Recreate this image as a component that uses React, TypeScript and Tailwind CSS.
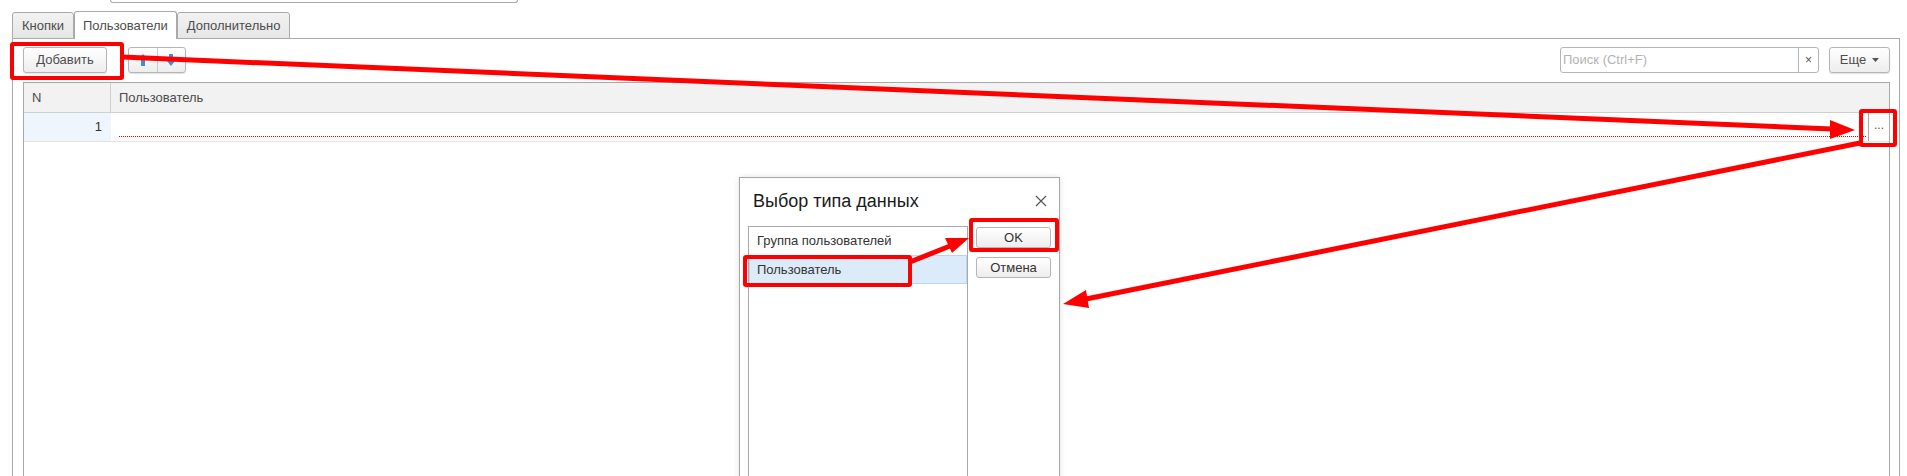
import React from 'react';

const font = { fontFamily: '"Liberation Sans", Arial, sans-serif' };

function ToolButton({ children, className = '' }: { children: React.ReactNode; className?: string }) {
  return (
    <div
      className={`flex h-[26px] items-center justify-center rounded-[3px] border border-[#b5b5b5] bg-gradient-to-b from-white to-[#ededed] text-[13px] text-[#4d4d4d] shadow-[0_1px_1px_rgba(0,0,0,0.12)] ${className}`}
    >
      {children}
    </div>
  );
}

function ArrowUpIcon() {
  return (
    <svg width="10" height="14" viewBox="0 0 10 14">
      <polygon points="5,1 9,6 1,6" fill="#3d8fd7" />
      <rect x="3" y="6" width="4" height="7" fill="#3d8fd7" />
    </svg>
  );
}

function ArrowDownIcon() {
  return (
    <svg width="10" height="14" viewBox="0 0 10 14">
      <rect x="3" y="1" width="4" height="7" fill="#3d8fd7" />
      <polygon points="5,13 9,8 1,8" fill="#3d8fd7" />
    </svg>
  );
}

function Tab({ label, active }: { label: string; active?: boolean }) {
  return active ? (
    <div className="flex h-[28px] items-center rounded-t-[3px] border-x border-t border-[#a9a9a9] bg-white px-[8px] text-[13px] text-[#4d4d4d]">
      {label}
    </div>
  ) : (
    <div className="flex h-[27px] items-center rounded-t-[3px] border border-[#a9a9a9] bg-gradient-to-b from-[#f2f2f2] to-[#e6e6e6] px-[9px] text-[13px] text-[#4d4d4d]">
      {label}
    </div>
  );
}

function RedBox({ className }: { className: string }) {
  return <div className={`pointer-events-none absolute rounded-[3px] border-[4px] border-[#ff0000] ${className}`} />;
}

function DataTypeDialog() {
  return (
    <div className="absolute left-[739px] top-[177px] h-[320px] w-[321px] border border-[#a6a6a6] bg-white shadow-[0_0_6px_rgba(0,0,0,0.12)]">
      <div className="flex h-[46px] items-center justify-between pl-[13px] pr-[12px]">
        <span className="text-[18px] text-[#1a1a1a]">Выбор типа данных</span>
        <svg width="12" height="12" viewBox="0 0 12 12">
          <path d="M1 1 L11 11 M11 1 L1 11" stroke="#555" strokeWidth="1.2" />
        </svg>
      </div>
      <div className="mt-[2px] flex gap-[8px] pl-[8px]">
        <div className="h-[260px] w-[220px] border border-[#a9a9a9] bg-white">
          <div className="flex h-[28px] items-center pl-[8px] text-[13px] text-[#333]">Группа пользователей</div>
          <div className="flex h-[29px] items-center border border-[#b7d7f4] bg-[#dcebfa] pl-[7px] text-[13px] text-[#333]">
            Пользователь
          </div>
        </div>
        <div className="flex w-[75px] flex-col gap-[9px] pt-[1px]">
          <div className="flex h-[21px] items-center justify-center rounded-[3px] border border-[#b5b5b5] bg-gradient-to-b from-white to-[#ededed] text-[13px] text-[#333]">
            OK
          </div>
          <div className="flex h-[21px] items-center justify-center rounded-[3px] border border-[#b5b5b5] bg-gradient-to-b from-white to-[#ededed] text-[13px] text-[#333]">
            Отмена
          </div>
        </div>
      </div>
    </div>
  );
}

function Annotations() {
  return (
    <>
      <RedBox className="left-[10px] top-[42px] h-[38px] w-[114px]" />
      <RedBox className="left-[1859px] top-[109px] h-[38px] w-[38px]" />
      <RedBox className="left-[743px] top-[255px] h-[32px] w-[169px]" />
      <RedBox className="left-[969px] top-[218px] h-[34px] w-[90px]" />
      <svg className="pointer-events-none absolute left-0 top-0" width="1907" height="476">
        <line x1="122" y1="57" x2="1832" y2="129" stroke="#ff0000" strokeWidth="5" />
        <polygon points="1855,130 1830,120 1830,139" fill="#ff0000" />
        <line x1="1860" y1="143" x2="1086" y2="299" stroke="#ff0000" strokeWidth="5" />
        <polygon points="1063,304 1089,308 1086,290" fill="#ff0000" />
        <line x1="910" y1="262" x2="950" y2="246" stroke="#ff0000" strokeWidth="5" />
        <polygon points="969,238 952,253 945,238" fill="#ff0000" />
      </svg>
    </>
  );
}

export default function App() {
  return (
    <div className="relative h-[476px] w-[1907px] overflow-hidden bg-white" style={font}>
      <div className="ml-[110px] h-[3px] w-[408px] rounded-b-[3px] border-x border-b border-[#a9a9a9]" />

      <div className="ml-[12px] mt-[8px] flex h-[465px] w-[1888px] flex-col">
        <div className="flex h-[28px] items-end">
          <Tab label="Кнопки" />
          <Tab label="Пользователи" active />
          <Tab label="Дополнительно" />
          <div className="h-full flex-1 border-b border-[#a9a9a9]" />
        </div>

        <div className="flex flex-1 flex-col border-x border-[#a9a9a9] pl-[10px] pr-[9px] pt-[8px]">
          <div className="flex h-[26px] items-center">
            <ToolButton className="w-[84px]">Добавить</ToolButton>
            <div className="ml-[21px] flex h-[26px] w-[58px] rounded-[3px] border border-[#b5b5b5] bg-gradient-to-b from-white to-[#ededed] shadow-[0_1px_1px_rgba(0,0,0,0.12)]">
              <div className="flex flex-1 items-center justify-center border-r border-[#c8c8c8]">
                <ArrowUpIcon />
              </div>
              <div className="flex flex-1 items-center justify-center">
                <ArrowDownIcon />
              </div>
            </div>
            <div className="flex-1" />
            <div className="flex h-[26px] w-[259px] rounded-[3px] border border-[#b5b5b5] bg-white">
              <div className="flex flex-1 items-center pl-[2px] text-[13px] text-[#b3b3b3]">Поиск (Ctrl+F)</div>
              <div className="flex w-[20px] items-center justify-center border-l border-[#b5b5b5] text-[12px] text-[#555]">×</div>
            </div>
            <ToolButton className="ml-[10px] w-[61px] gap-[6px]">
              <span>Еще</span>
              <svg width="7" height="4" viewBox="0 0 7 4">
                <polygon points="0,0 7,0 3.5,4" fill="#555" />
              </svg>
            </ToolButton>
          </div>

          <div className="mt-[9px] flex-1 border-x border-t border-[#a9a9a9]">
            <div className="flex h-[30px] border-b border-[#cfcfcf] bg-[#f2f2f2] text-[13px] text-[#4d4d4d]">
              <div className="flex w-[87px] items-center border-r border-[#cfcfcf] pl-[8px]">N</div>
              <div className="flex flex-1 items-center pl-[8px]">Пользователь</div>
            </div>
            <div className="flex h-[29px] border-b border-[#e3e3e3] text-[13px] text-[#333]">
              <div className="flex w-[87px] items-center justify-end bg-[#eef5fc] pr-[9px]">1</div>
              <div className="flex flex-1 pl-[8px]">
                <div className="h-[24px] flex-1 border-b border-dotted border-[#e00000]" />
                <div className="ml-[2px] flex w-[21px] items-center justify-center border-l border-[#a9a9a9] pb-[4px] text-[12px] text-[#555]">
                  ...
                </div>
              </div>
            </div>
          </div>
        </div>
      </div>

      <DataTypeDialog />
      <Annotations />
    </div>
  );
}
